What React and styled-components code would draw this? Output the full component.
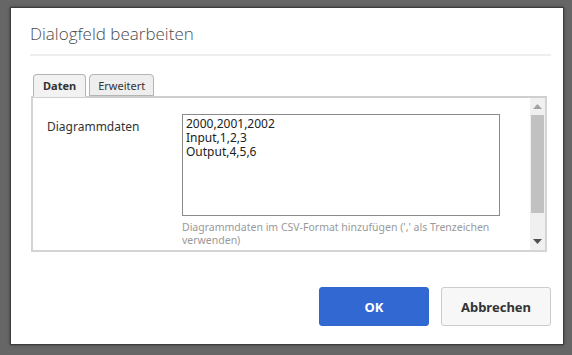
import styled, { createGlobalStyle } from "styled-components";

const GlobalStyle = createGlobalStyle`
  html, body {
    margin: 0;
    padding: 0;
    background: #666666;
    font-family: "Open Sans", "Noto Sans", sans-serif;
  }
`;

const Backdrop = styled.div`
  width: 572px;
  height: 355px;
  padding: 7px 0 0 10px;
  box-sizing: border-box;
  overflow: hidden;
`;

const Dialog = styled.div`
  width: 554px;
  height: 338px;
  box-sizing: border-box;
  background: #fff;
  border: 1px solid #3c3c3c;
  box-shadow: 0 0 3px rgba(0, 0, 0, 0.4);
  padding: 0 12px 0 19px;
  display: flex;
  flex-direction: column;
`;

const Header = styled.div`
  padding: 13px 0 8px;
  border-bottom: 2px solid #eeeeee;
`;

const Title = styled.h1`
  margin: 0;
  font-size: 17px;
  font-weight: 300;
  line-height: 25px;
  color: #4b4b4b;
`;

const Tabs = styled.div`
  display: flex;
  gap: 3px;
  margin: 18px 0 0 3px;
  position: relative;
  z-index: 1;
`;

const Tab = styled.div`
  padding: 0 ${(p) => (p.$active ? "9px" : "8px")};
  box-sizing: border-box;
  border: 1px solid #b4b4b4;
  border-bottom: ${(p) => (p.$active ? "1px solid #f2f2f2" : "1px solid #b4b4b4")};
  border-radius: 4px 4px 0 0;
  background: ${(p) => (p.$active ? "#f2f2f2" : "#eeeeee")};
  font-family: "Noto Sans", sans-serif;
  font-size: 11px;
  font-weight: ${(p) => (p.$active ? 700 : 400)};
  color: #333;
  display: flex;
  align-items: center;
  height: ${(p) => (p.$active ? "23px" : "22px")};
`;

const Panel = styled.div`
  margin: -1px 0 0 1px;
  width: 516px;
  height: 156px;
  box-sizing: border-box;
  border: 2px solid #d4d4d4;
  border-top: 2px solid #cfcfcf;
  display: flex;
`;

const PanelBody = styled.div`
  flex: 1;
  display: flex;
  padding: 16px 0 0 14px;
  gap: 40px;
`;

const Label = styled.div`
  width: 95px;
  font-family: "Noto Sans", sans-serif;
  font-size: 12px;
  color: #333;
  padding-top: 4px;
`;

const Field = styled.div`
  display: flex;
  flex-direction: column;
`;

const TextArea = styled.textarea`
  width: 318px;
  height: 102px;
  box-sizing: border-box;
  border: 1px solid #8a8a8a;
  padding: 2px 3px;
  margin: 0;
  resize: none;
  font-family: "Noto Sans", sans-serif;
  font-size: 12px;
  line-height: 14px;
  color: #222;
  outline: none;
`;

const Hint = styled.div`
  width: 320px;
  margin-top: 5px;
  font-family: "Noto Sans", sans-serif;
  font-size: 10.5px;
  line-height: 13px;
  color: #999;
`;

const Scrollbar = styled.div`
  width: 15px;
  background: #f0f0f0;
  display: flex;
  flex-direction: column;
  align-items: center;
`;

const Arrow = styled.div`
  height: 17px;
  display: flex;
  align-items: center;
  justify-content: center;
`;

const Thumb = styled.div`
  width: 13px;
  height: 98px;
  background: #c1c1c1;
`;

const Spacer = styled.div`
  flex: 1;
`;

const Footer = styled.div`
  display: flex;
  justify-content: flex-end;
  gap: 12px;
  margin-top: 35px;
`;

const Button = styled.button`
  width: 110px;
  height: 39px;
  box-sizing: border-box;
  border-radius: 3px;
  border: 1px solid ${(p) => (p.$primary ? "#2f67cf" : "#cccccc")};
  background: ${(p) => (p.$primary ? "#3268d1" : "#f7f7f7")};
  color: ${(p) => (p.$primary ? "#fff" : "#333")};
  font-family: "Noto Sans", sans-serif;
  font-size: 13px;
  font-weight: 700;
  padding: 0;
`;

export default function App() {
  return (
    <>
      <GlobalStyle />
      <Backdrop>
        <Dialog>
          <Header>
            <Title>Dialogfeld bearbeiten</Title>
          </Header>
          <Tabs>
            <Tab $active>Daten</Tab>
            <Tab>Erweitert</Tab>
          </Tabs>
          <Panel>
            <PanelBody>
              <Label>Diagrammdaten</Label>
              <Field>
                <TextArea
                  defaultValue={"2000,2001,2002\nInput,1,2,3\nOutput,4,5,6"}
                />
                <Hint>
                  Diagrammdaten im CSV-Format hinzufügen (',' als Trenzeichen
                  verwenden)
                </Hint>
              </Field>
            </PanelBody>
            <Scrollbar>
              <Arrow>
                <svg width="9" height="5" viewBox="0 0 9 5">
                  <path d="M0 5 L4.5 0 L9 5 Z" fill="#a3a3a3" />
                </svg>
              </Arrow>
              <Thumb />
              <Spacer />
              <Arrow>
                <svg width="9" height="5" viewBox="0 0 9 5">
                  <path d="M0 0 L9 0 L4.5 5 Z" fill="#505050" />
                </svg>
              </Arrow>
            </Scrollbar>
          </Panel>
          <Footer>
            <Button $primary>OK</Button>
            <Button>Abbrechen</Button>
          </Footer>
        </Dialog>
      </Backdrop>
    </>
  );
}
